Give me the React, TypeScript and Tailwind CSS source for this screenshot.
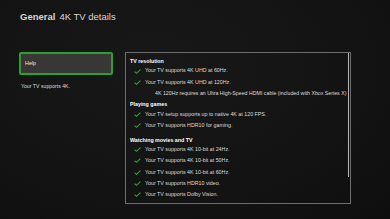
import React from 'react';

const font = { fontFamily: '"Liberation Sans", Arial, sans-serif' };

function Check() {
  return (
    <svg width="7" height="5" viewBox="0 0 7 5" className="shrink-0">
      <path d="M0.6 2.6 L2.5 4.3 L6.4 0.6" fill="none" stroke="#35a035" strokeWidth="1.1" />
    </svg>
  );
}

function Item({ text }: { text: string }) {
  return (
    <div className="flex items-center h-[11.25px] pl-[4px] gap-[4px]">
      <Check />
      <span className="text-[5.3px] leading-none text-[#dcdcdc] whitespace-nowrap">{text}</span>
    </div>
  );
}

function Header({ text, className = '' }: { text: string; className?: string }) {
  return (
    <div className={`flex items-center h-[7px] text-[5.3px] font-bold text-white whitespace-nowrap ${className}`}>
      {text}
    </div>
  );
}

export default function App() {
  return (
    <div
      className="w-[390px] h-[219px] overflow-hidden bg-[radial-gradient(ellipse_at_40%_30%,#181818_0%,#121212_70%,#0e0e0e_100%)] px-[19px] pt-[10px]"
      style={font}
    >
      <h1 className="h-[14px] leading-[14px] text-[9.5px] text-[#d6d6d6] whitespace-nowrap pl-[1px]">
        <span className="font-bold">General</span>
        <span className="ml-[4px]">4K TV details</span>
      </h1>
      <div className="flex mt-[28px]">
        <div className="w-[94px] shrink-0">
          <div className="h-[23px] border-2 border-[#2aa12a] rounded-[2px] bg-[#393735] flex items-center pl-[4px] text-[5.4px] text-[#e6e6e6]">
            Help
          </div>
          <div className="mt-[8px] pl-[2px] text-[5.2px] text-[#dadada] whitespace-nowrap">Your TV supports 4K.</div>
        </div>
        <div className="relative ml-[12px] w-[226px] h-[152px] border border-[#6e6e6e] pt-[5.5px] pl-[4px]">
          <div className="absolute right-[1px] top-0 w-[1.5px] h-[124px] bg-[#b8b8b8]" />
          <Header text="TV resolution" />
          <Item text="Your TV supports 4K UHD at 60Hz." />
          <Item text="Your TV supports 4K UHD at 120Hz." />
          <div className="flex items-center h-[11.25px] pl-[25px] text-[5.25px] text-[#dcdcdc] whitespace-nowrap">
            4K 120Hz requires an Ultra High-Speed HDMI cable (included with Xbox Series X)
          </div>
          <Header text="Playing games" className="mt-[2.4px]" />
          <Item text="Your TV setup supports up to native 4K at 120 FPS." />
          <Item text="Your TV supports HDR10 for gaming." />
          <Header text="Watching movies and TV" className="mt-[5.9px]" />
          <Item text="Your TV supports 4K 10-bit at 24Hz." />
          <Item text="Your TV supports 4K 10-bit at 50Hz." />
          <Item text="Your TV supports 4K 10-bit at 60Hz." />
          <Item text="Your TV supports HDR10 video." />
          <Item text="Your TV supports Dolby Vision." />
        </div>
      </div>
    </div>
  );
}
